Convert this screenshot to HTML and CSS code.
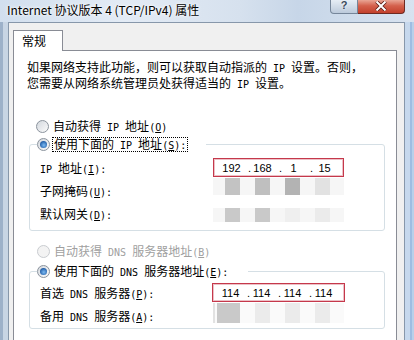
FILE: index.html
```html
<!DOCTYPE html>
<html lang="zh-CN">
  <head>
    <meta charset="UTF-8" />
    <meta name="viewport" content="width=device-width, initial-scale=1.0" />
    <title>Internet 协议版本 4 (TCP/IPv4) 属性</title>
    <link rel="stylesheet" href="styles.css">
  </head>
  <body>
    <div class="window">
      <div class="titlebar">
        <span class="title">Internet 协议版本 4 (TCP/IPv4) 属性</span>
        <div class="caption-buttons">
          <span class="btn-help">?</span>
          <span class="btn-close">
            <svg width="12" height="10" viewBox="0 0 12 10">
              <path d="M1.5 0.5 L10.5 9.5 M10.5 0.5 L1.5 9.5" stroke="#5a1d16" stroke-width="3.6" />
              <path d="M1.5 0.5 L10.5 9.5 M10.5 0.5 L1.5 9.5" stroke="#fff" stroke-width="2" />
            </svg>
          </span>
        </div>
      </div>

      <div class="frame">
        <div class="edge-left"></div>
        <div class="client">
          <div class="tabs"><span class="tab">常规</span></div>

          <div class="panel">
            <p class="intro">如果网络支持此功能，则可以获取自动指派的<span class="en"> IP </span>设置。否则，</p>
            <p class="intro">您需要从网络系统管理员处获得适当的<span class="en"> IP </span>设置。</p>

            <div class="option first">
              <span class="radio"></span>
              <span>自动获得<span class="en"> IP </span>地址<span class="en">(<u>O</u>)</span></span>
            </div>

            <fieldset class="group">
              <legend class="legend-ip">
                <div class="option">
                  <span class="radio checked"></span>
                  <span class="focus">使用下面的<span class="en"> IP </span>地址<span class="en">(<u>S</u>):</span></span>
                </div>
              </legend>
              <div class="field">
                <label><span class="en">IP </span>地址<span class="en">(<u>I</u>):</span></label>
                <div class="ip-box">
                  <span class="seg">192</span><span class="dot">.</span>
                  <span class="seg">168</span><span class="dot">.</span>
                  <span class="seg">1</span><span class="dot">.</span>
                  <span class="seg">15</span>
                </div>
              </div>
              <div class="field">
                <label>子网掩码<span class="en">(<u>U</u>):</span></label>
                <div class="mosaic mask">
                  <span class="m c1"></span><span class="m c2"></span><span class="m c3"></span><span class="m c4"></span>
                </div>
              </div>
              <div class="field">
                <label>默认网关<span class="en">(<u>D</u>):</span></label>
                <div class="mosaic gateway">
                  <span class="m c5"></span><span class="m c5"></span><span class="m c6"></span><span class="m c7"></span>
                </div>
              </div>
            </fieldset>

            <div class="option second">
              <span class="radio disabled"></span>
              <span class="muted">自动获得<span class="en"> DNS </span>服务器地址<span class="en">(<u>B</u>)</span></span>
            </div>

            <fieldset class="group dns">
              <legend class="legend-dns">
                <div class="option">
                  <span class="radio checked"></span>
                  <span>使用下面的<span class="en"> DNS </span>服务器地址<span class="en">(<u>E</u>):</span></span>
                </div>
              </legend>
              <div class="field">
                <label>首选<span class="en"> DNS </span>服务器<span class="en">(<u>P</u>):</span></label>
                <div class="ip-box">
                  <span class="seg">114</span><span class="dot">.</span>
                  <span class="seg">114</span><span class="dot">.</span>
                  <span class="seg">114</span><span class="dot">.</span>
                  <span class="seg">114</span>
                </div>
              </div>
              <div class="field">
                <label>备用<span class="en"> DNS </span>服务器<span class="en">(<u>A</u>):</span></label>
                <div class="mosaic alt">
                  <span class="m c5 wide"></span><span class="m c7"></span><span class="m c7"></span><span class="m c7"></span>
                </div>
              </div>
            </fieldset>
          </div>
        </div>
        <div class="edge-right"></div>
      </div>
    </div>
  </body>
</html>
```

FILE: styles.css
```css
body {
  margin: 0;
  width: 414px;
  height: 340px;
  overflow: hidden;
  font-family: "Noto Sans CJK SC", sans-serif;
  font-size: 12px;
  color: #000;
  background: #c6d6e9;
}
.window {
  display: flex;
  flex-direction: column;
  height: 340px;
}

/* title bar */
.titlebar {
  height: 22px;
  display: flex;
  justify-content: space-between;
  align-items: flex-start;
  background: linear-gradient(to right, #d2dfee 0%, #e3ebf5 30%, #d6e1ee 58%, #c7d6e8 72%, #d8e3f0 100%);
}
.title {
  padding: 2px 0 0 7px;
  line-height: 16px;
  text-shadow: 0 0 4px #fff, 0 0 2px #fff;
}
.caption-buttons {
  display: flex;
  margin-right: 9px;
}
.btn-help {
  width: 28px;
  height: 14px;
  box-sizing: border-box;
  border: 1px solid #76869a;
  border-top: none;
  border-radius: 0 0 0 4px;
  background: linear-gradient(#e6edf5, #bccadb);
  text-align: center;
  font-family: "Liberation Sans", sans-serif;
  font-weight: bold;
  font-size: 11px;
  line-height: 10px;
  color: #3a4a5c;
  text-shadow: 0 0 2px #fff;
}
.btn-close {
  width: 47px;
  height: 14px;
  box-sizing: border-box;
  border: 1px solid #6e2a22;
  border-top: none;
  border-left: none;
  border-radius: 0 0 4px 0;
  background: linear-gradient(#e9a595, #d4604c 45%, #c2402c);
  display: flex;
  justify-content: center;
  padding-top: 1px;
}

/* window frame */
.frame {
  flex: 1;
  display: flex;
  min-height: 0;
}
.edge-left {
  width: 8px;
  background: linear-gradient(to right, #9db1c9 0 3px, #c8d5e4 3px);
}
.edge-right {
  width: 9px;
  background: linear-gradient(to right, #c6d8ed 0 5px, #9fbde2 5px 7px, #b9d0ea 7px);
}
.client {
  flex: 1;
  display: flex;
  flex-direction: column;
  background: #f0f0f0;
  border: 1px solid #8797aa;
  border-bottom: none;
  padding: 7px 7px 0 4px;
}

/* tab */
.tabs {
  display: flex;
  height: 20px;
}
.tab {
  width: 50px;
  box-sizing: border-box;
  height: 21px;
  border: 1px solid #898c95;
  border-bottom: none;
  background: #fff;
  padding-left: 8px;
  line-height: 20px;
  position: relative;
  z-index: 1;
}
.panel {
  flex: 1;
  border: 1px solid #898c95;
  border-bottom: none;
  background: #fff;
  padding: 8px 11px 0 13px;
}
.intro {
  margin: 0;
  line-height: 15.5px;
  white-space: nowrap;
}

/* SimSun-like half width latin */
.en {
  font-family: "DejaVu Sans Mono", monospace;
  font-size: 10px;
  line-height: 10px;
}

/* radio rows */
.option {
  display: flex;
  align-items: center;
  gap: 4px;
  height: 16px;
  line-height: 16px;
  white-space: nowrap;
}
.option.first {
  margin: 28px 0 0 9px;
}
.option.second {
  margin: 12px 0 0 10px;
}
.radio {
  flex: none;
  width: 13px;
  height: 13px;
  box-sizing: border-box;
  border-radius: 50%;
  border: 1px solid #8b939d;
  background: linear-gradient(135deg, #d3d8de, #fbfbfb);
  display: flex;
  align-items: center;
  justify-content: center;
}
.radio.checked::after {
  content: "";
  width: 7px;
  height: 7px;
  border-radius: 50%;
  background: radial-gradient(circle at 55% 60%, #7cbaf2, #2764ad 65%, #193f73);
}
.radio.disabled {
  border-color: #c9ccd0;
  background: #f3f3f3;
}
.muted {
  color: #a0a0a0;
}
.focus {
  line-height: 12px;
  outline: 1px dotted #000;
  padding: 0 1px;
  margin-left: -1px;
}

/* group boxes */
.group {
  margin: 2px 0 0 2px;
  padding: 4px 0 5px 7px;
  border: 1px solid #d5dfe5;
  border-radius: 3px;
  min-width: 0;
}
.group.dns {
  margin-top: 4px;
  padding: 2px 0 1px 7px;
}
.group legend {
  padding: 0;
}
.legend-ip {
  width: 169px;
}
.legend-dns {
  width: 211px;
}
.field {
  display: grid;
  grid-template-columns: 173px 131px;
  align-items: center;
  height: 23px;
  margin-left: 3px;
}
.dns .field .ip-box {
  margin-left: -1px;
  width: 133px;
}

/* address boxes */
.ip-box {
  height: 19px;
  box-sizing: border-box;
  border: 1px solid #c5384b;
  box-shadow: inset 0 0 0 1px #ecc0c6;
  display: flex;
  align-items: center;
  padding-left: 6px;
  font-family: "Liberation Sans", sans-serif;
  font-size: 11px;
}
.seg {
  width: 23px;
  text-align: center;
}
.dot {
  width: 8px;
  text-align: right;
}

/* blurred values */
.mosaic {
  display: flex;
  gap: 15px;
  padding-left: 12px;
  align-self: start;
  background: #f6f6f6;
}
.mosaic.mask {
  height: 17px;
  margin-top: -1px;
}
.mosaic.gateway {
  height: 14px;
  margin-top: 6px;
}
.mosaic.alt {
  height: 20px;
  margin-top: -1px;
  border-left: 2px solid #e2e2e2;
  padding-left: 2px;
  background: #fafafa;
}
.m {
  width: 15px;
}
.m.wide {
  width: 23px;
}
.c1 { background: #c3c3c3; }
.c2 { background: #bfbfbf; }
.c3 { background: #b3b3b3; }
.c4 { background: #e2e2e2; }
.c5 { background: #c9c9c9; }
.c6 { background: #efefef; }
.c7 { background: #ebebeb; }
```
